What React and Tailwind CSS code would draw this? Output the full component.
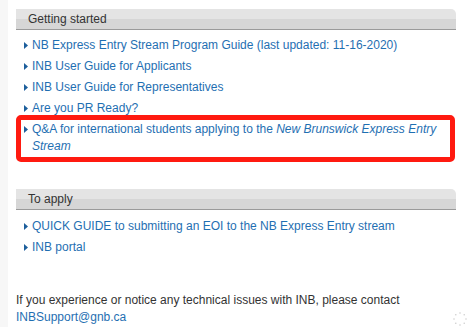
import React from 'react';

const gettingStarted = [
  { text: 'NB Express Entry Stream Program Guide (last updated: 11-16-2020)' },
  { text: 'INB User Guide for Applicants' },
  { text: 'INB User Guide for Representatives' },
  { text: 'Are you PR Ready?' },
  { highlight: true },
];

const toApply = [
  { text: 'QUICK GUIDE to submitting an EOI to the NB Express Entry stream' },
  { text: 'INB portal' },
];

function Bullet() {
  return (
    <svg width="4" height="7" viewBox="0 0 4 7" className="mt-[5px] shrink-0">
      <polygon points="0,0 4,3.5 0,7" fill="#1d5f9c" />
    </svg>
  );
}

function SectionHeader({ title }) {
  return (
    <div className="h-[21px] rounded-tr-[5px] border-b border-[#9a9a9a] bg-[linear-gradient(#e4e4e4_0px,#e4e4e4_10px,#d6d6d6_10px,#d6d6d6_100%)] pl-3 text-[12px] leading-[21px] text-[#333]">
      {title}
    </div>
  );
}

function LinkItem({ item }) {
  if (item.highlight) {
    return (
      <li className="relative mb-1 flex gap-[4px] pl-2">
        <Bullet />
        <a className="text-[#1f6fb2]">
          Q&amp;A for international students applying to the{' '}
          <em>New Brunswick Express Entry Stream</em>
        </a>
        {/* annotation box */}
        <div className="pointer-events-none absolute -top-[6px] -bottom-[7px] left-0 right-[1px] rounded-[5px] border-[5px] border-[#ff1a10]" />
      </li>
    );
  }
  return (
    <li className="mb-1 flex gap-[4px] pl-2">
      <Bullet />
      <a className="text-[#1f6fb2]">{item.text}</a>
    </li>
  );
}

export default function App() {
  return (
    <div
      className="relative flex min-h-[327px] w-[473px] bg-white"
      style={{ fontFamily: '"Liberation Sans", Arial, sans-serif' }}
    >
      <div className="w-[8px] shrink-0 bg-[#f7f7f7]" />
      <div className="w-[448px] pl-2 pt-[9px] text-[12px] leading-[17px]">
        <SectionHeader title="Getting started" />
        <ul className="mt-[7px]">
          {gettingStarted.map((item, i) => (
            <LinkItem key={i} item={item} />
          ))}
        </ul>

        <div className="mt-[34px]">
          <SectionHeader title="To apply" />
        </div>
        <ul className="mt-[8px]">
          {toApply.map((item, i) => (
            <LinkItem key={i} item={item} />
          ))}
        </ul>

        <p className="mt-[36px] text-[#333]">
          If you experience or notice any technical issues with INB, please contact{' '}
          <a className="text-[#1f6fb2]">INBSupport@gnb.ca</a>
        </p>
      </div>

      {/* faint loading spinner */}
      <svg
        width="16"
        height="16"
        viewBox="0 0 16 16"
        className="absolute left-[452px] top-[311px] opacity-40"
      >
        {[0, 45, 90, 135, 180, 225, 270, 315].map((a) => (
          <circle
            key={a}
            cx={8 + 6 * Math.cos((a * Math.PI) / 180)}
            cy={8 + 6 * Math.sin((a * Math.PI) / 180)}
            r="0.8"
            fill="#888"
          />
        ))}
      </svg>
    </div>
  );
}
